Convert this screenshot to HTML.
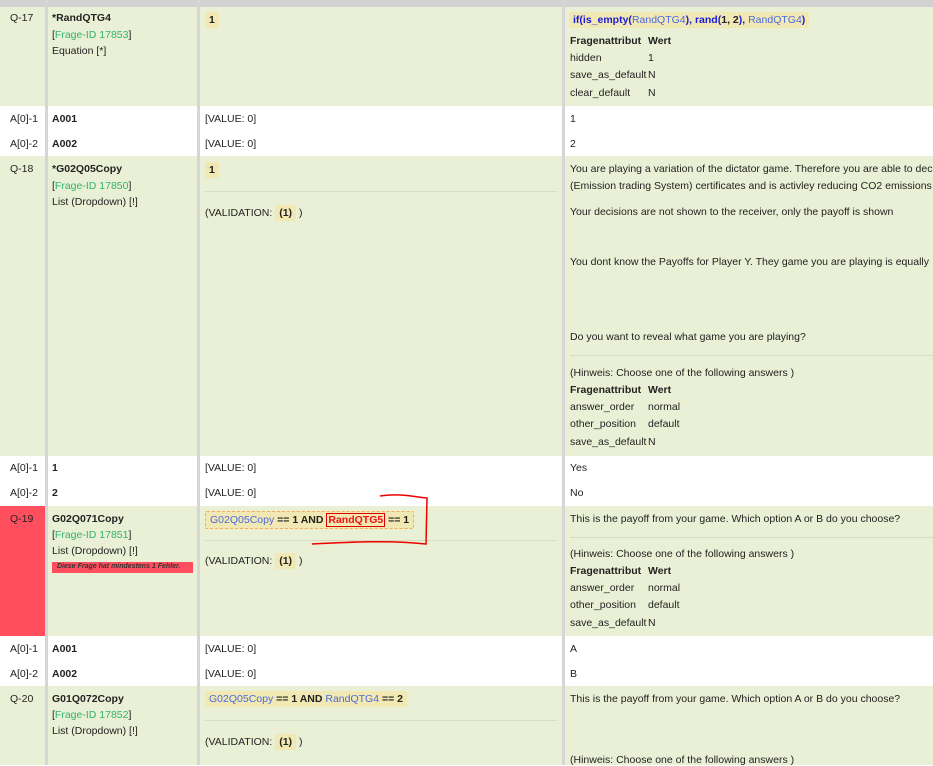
<!DOCTYPE html>
<html><head><meta charset="utf-8"><style>
*{margin:0;padding:0;box-sizing:border-box}
body{width:933px;height:765px;overflow:hidden;background:#fff;font-family:"Liberation Sans",sans-serif;font-size:10.5px;color:#222;position:relative}
.a{position:absolute;white-space:nowrap}
.g{background:#eaf0d5}
.vl{position:absolute;top:0;height:765px;width:3px;background:#d6d6d6}
.b{font-weight:bold}
.gr{color:#2fb36b}
.bl{color:#4a6bdc}
.db{color:#1a1adb;font-weight:bold}
.chip{position:absolute;background:#f1e8b3;border-radius:2px;padding:2px 4px;font-weight:bold}
.hr{position:absolute;height:1px;background:#d5dcc0}
</style></head><body>
<div class="a" style="left:0;top:0;width:933px;height:7px;background:#d2d2d2"></div>
<!-- green rows -->
<div class="a g" style="left:0;top:7px;width:933px;height:99px"></div>
<div class="a g" style="left:0;top:156px;width:933px;height:300px"></div>
<div class="a g" style="left:0;top:506px;width:933px;height:130px"></div>
<div class="a" style="left:0;top:506px;width:45px;height:130px;background:#ff4f5e"></div>
<div class="a g" style="left:0;top:686px;width:933px;height:79px"></div>
<div class="vl" style="left:45px"></div>
<div class="vl" style="left:197px"></div>
<div class="vl" style="left:562px"></div>

<!-- Q-17 -->
<div class="a" style="left:10px;top:12px">Q-17</div>
<div class="a b" style="left:52px;top:12px">*RandQTG4</div>
<div class="a" style="left:52px;top:29px">[<span class="gr">Frage-ID 17853</span>]</div>
<div class="a" style="left:52px;top:45px">Equation [*]</div>
<div class="chip" style="left:205px;top:12px">1</div>
<div class="chip" style="left:569px;top:12px;font-weight:normal"><span class="db">if(is_empty(</span><span class="bl">RandQTG4</span><span class="db">), rand(</span><b>1, 2</b><span class="db">),</span> <span class="bl">RandQTG4</span><span class="db">)</span></div>
<div class="a b" style="left:570px;top:35px">Fragenattribut</div><div class="a b" style="left:648px;top:35px">Wert</div>
<div class="a" style="left:570px;top:52px">hidden</div><div class="a" style="left:648px;top:52px">1</div>
<div class="a" style="left:570px;top:69px">save_as_default</div><div class="a" style="left:648px;top:69px">N</div>
<div class="a" style="left:570px;top:87px">clear_default</div><div class="a" style="left:648px;top:87px">N</div>

<div class="a" style="left:10px;top:113px">A[0]-1</div><div class="a b" style="left:52px;top:113px">A001</div><div class="a" style="left:205px;top:113px">[VALUE: 0]</div><div class="a" style="left:570px;top:113px">1</div>
<div class="a" style="left:10px;top:138px">A[0]-2</div><div class="a b" style="left:52px;top:138px">A002</div><div class="a" style="left:205px;top:138px">[VALUE: 0]</div><div class="a" style="left:570px;top:138px">2</div>

<!-- Q-18 -->
<div class="a" style="left:10px;top:163px">Q-18</div>
<div class="a b" style="left:52px;top:163px">*G02Q05Copy</div>
<div class="a" style="left:52px;top:180px">[<span class="gr">Frage-ID 17850</span>]</div>
<div class="a" style="left:52px;top:196px">List (Dropdown) [!]</div>
<div class="chip" style="left:205px;top:162px">1</div>
<div class="hr" style="left:205px;top:191px;width:352px"></div>
<div class="a" style="left:205px;top:207px">(VALIDATION: <span class="chip" style="position:relative">(1)</span> )</div>
<div class="a" style="left:570px;top:163px">You are playing a variation of the dictator game. Therefore you are able to dec</div>
<div class="a" style="left:570px;top:180px">(Emission trading System) certificates and is activley reducing CO2 emissions</div>
<div class="a" style="left:570px;top:206px">Your decisions are not shown to the receiver, only the payoff is shown</div>
<div class="a" style="left:570px;top:256px">You dont know the Payoffs for Player Y. They game you are playing is equally</div>
<div class="a" style="left:570px;top:331px">Do you want to reveal what game you are playing?</div>
<div class="hr" style="left:570px;top:355px;width:363px"></div>
<div class="a" style="left:570px;top:367px">(Hinweis: Choose one of the following answers )</div>
<div class="a b" style="left:570px;top:384px">Fragenattribut</div><div class="a b" style="left:648px;top:384px">Wert</div>
<div class="a" style="left:570px;top:401px">answer_order</div><div class="a" style="left:648px;top:401px">normal</div>
<div class="a" style="left:570px;top:418px">other_position</div><div class="a" style="left:648px;top:418px">default</div>
<div class="a" style="left:570px;top:436px">save_as_default</div><div class="a" style="left:648px;top:436px">N</div>

<div class="a" style="left:10px;top:462px">A[0]-1</div><div class="a b" style="left:52px;top:462px">1</div><div class="a" style="left:205px;top:462px">[VALUE: 0]</div><div class="a" style="left:570px;top:462px">Yes</div>
<div class="a" style="left:10px;top:487px">A[0]-2</div><div class="a b" style="left:52px;top:487px">2</div><div class="a" style="left:205px;top:487px">[VALUE: 0]</div><div class="a" style="left:570px;top:487px">No</div>

<!-- Q-19 -->
<div class="a" style="left:10px;top:513px">Q-19</div>
<div class="a b" style="left:52px;top:513px">G02Q071Copy</div>
<div class="a" style="left:52px;top:529px">[<span class="gr">Frage-ID 17851</span>]</div>
<div class="a" style="left:52px;top:545px">List (Dropdown) [!]</div>
<div class="a" style="left:52px;top:562px;width:141px;height:11px;background:#ff4f5e;font-size:7px;font-style:italic;font-weight:bold;color:#333;padding:1px 0 0 5px">Diese Frage hat mindestens 1 Fehler.</div>
<div class="chip" style="left:205px;top:511px;border:1px dashed #f0b060;font-weight:normal"><span class="bl">G02Q05Copy</span> <b>== 1 AND</b> <span style="color:#e11;font-weight:bold;border:1px solid #d00;padding:0 1px">RandQTG5</span> <b>== 1</b></div>
<div class="hr" style="left:205px;top:540px;width:352px"></div>
<div class="a" style="left:205px;top:555px">(VALIDATION: <span class="chip" style="position:relative">(1)</span> )</div>
<svg class="a" style="left:300px;top:490px" width="140" height="60"><path d="M80 6 C100 3 115 7 127 8 L126 54 C90 50 50 52 12 54" fill="none" stroke="#e00" stroke-width="1.5"/></svg>
<div class="a" style="left:570px;top:513px">This is the payoff from your game. Which option A or B do you choose?</div>
<div class="hr" style="left:570px;top:537px;width:363px"></div>
<div class="a" style="left:570px;top:548px">(Hinweis: Choose one of the following answers )</div>
<div class="a b" style="left:570px;top:565px">Fragenattribut</div><div class="a b" style="left:648px;top:565px">Wert</div>
<div class="a" style="left:570px;top:582px">answer_order</div><div class="a" style="left:648px;top:582px">normal</div>
<div class="a" style="left:570px;top:599px">other_position</div><div class="a" style="left:648px;top:599px">default</div>
<div class="a" style="left:570px;top:617px">save_as_default</div><div class="a" style="left:648px;top:617px">N</div>

<div class="a" style="left:10px;top:643px">A[0]-1</div><div class="a b" style="left:52px;top:643px">A001</div><div class="a" style="left:205px;top:643px">[VALUE: 0]</div><div class="a" style="left:570px;top:643px">A</div>
<div class="a" style="left:10px;top:668px">A[0]-2</div><div class="a b" style="left:52px;top:668px">A002</div><div class="a" style="left:205px;top:668px">[VALUE: 0]</div><div class="a" style="left:570px;top:668px">B</div>

<!-- Q-20 -->
<div class="a" style="left:10px;top:693px">Q-20</div>
<div class="a b" style="left:52px;top:693px">G01Q072Copy</div>
<div class="a" style="left:52px;top:709px">[<span class="gr">Frage-ID 17852</span>]</div>
<div class="a" style="left:52px;top:725px">List (Dropdown) [!]</div>
<div class="chip" style="left:205px;top:691px;font-weight:normal"><span class="bl">G02Q05Copy</span> <b>== 1 AND</b> <span class="bl">RandQTG4</span> <b>== 2</b></div>
<div class="hr" style="left:205px;top:720px;width:352px"></div>
<div class="a" style="left:205px;top:736px">(VALIDATION: <span class="chip" style="position:relative">(1)</span> )</div>
<div class="a" style="left:570px;top:693px">This is the payoff from your game. Which option A or B do you choose?</div>
<div class="a" style="left:570px;top:754px">(Hinweis: Choose one of the following answers )</div>
</body></html>
